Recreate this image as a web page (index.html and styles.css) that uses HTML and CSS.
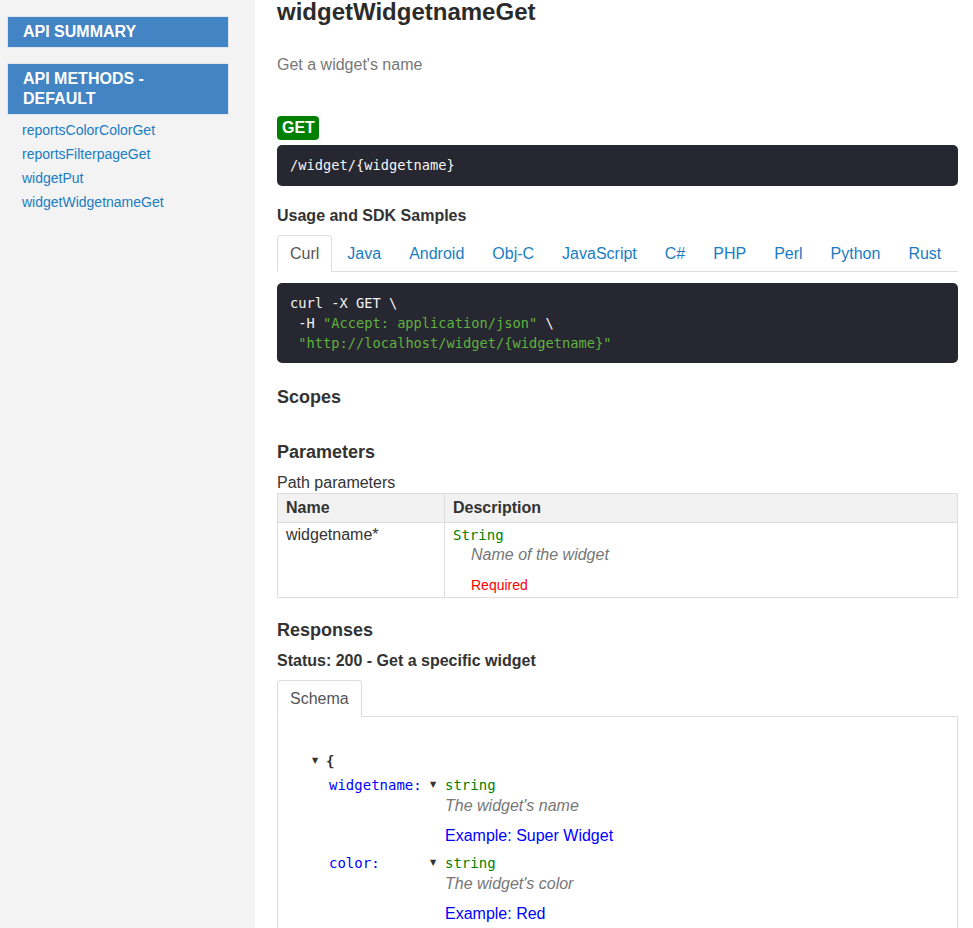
FILE: index.html
```html
<!DOCTYPE html>
<html>
<head>
<meta charset="utf-8">
<title>widgetWidgetnameGet</title>
<link rel="stylesheet" href="styles.css">
</head>
<body>
<div class="page">
  <nav class="sidebar">
    <div class="nav-header">API SUMMARY</div>
    <div class="nav-header nav-header-methods">API METHODS - DEFAULT</div>
    <ul class="nav-links">
      <li><a href="#">reportsColorColorGet</a></li>
      <li><a href="#">reportsFilterpageGet</a></li>
      <li><a href="#">widgetPut</a></li>
      <li><a href="#">widgetWidgetnameGet</a></li>
    </ul>
  </nav>
  <main class="content">
    <h1 class="method-title">widgetWidgetnameGet</h1>
    <p class="method-summary">Get a widget's name</p>
    <div class="method-row"><span class="badge-get">GET</span></div>
    <pre class="code code-path">/widget/{widgetname}</pre>

    <h3 class="sub-heading usage-heading">Usage and SDK Samples</h3>
    <ul class="tabs sdk-tabs">
      <li class="tab active"><a href="#">Curl</a></li>
      <li class="tab"><a href="#">Java</a></li>
      <li class="tab"><a href="#">Android</a></li>
      <li class="tab"><a href="#">Obj-C</a></li>
      <li class="tab"><a href="#">JavaScript</a></li>
      <li class="tab"><a href="#">C#</a></li>
      <li class="tab"><a href="#">PHP</a></li>
      <li class="tab"><a href="#">Perl</a></li>
      <li class="tab"><a href="#">Python</a></li>
      <li class="tab"><a href="#">Rust</a></li>
    </ul>
    <pre class="code code-sample">curl -X GET \
 -H <span class="str">"Accept: application/json"</span> \
 <span class="str">"http://localhost/widget/{widgetname}"</span></pre>

    <h2 class="section-heading scopes-heading">Scopes</h2>
    <h2 class="section-heading params-heading">Parameters</h2>
    <div class="param-group">Path parameters</div>
    <table class="params-table">
      <thead>
        <tr><th class="col-name">Name</th><th>Description</th></tr>
      </thead>
      <tbody>
        <tr>
          <td class="col-name">widgetname*</td>
          <td>
            <div class="param-type">String</div>
            <div class="param-desc">Name of the widget</div>
            <div class="param-required">Required</div>
          </td>
        </tr>
      </tbody>
    </table>

    <h2 class="section-heading responses-heading">Responses</h2>
    <h3 class="sub-heading status-heading">Status: 200 - Get a specific widget</h3>
    <ul class="tabs schema-tabs">
      <li class="tab active"><a href="#">Schema</a></li>
    </ul>
    <div class="tab-panel">
      <div class="json-view">
        <div class="obj-open"><span class="toggle">&#9660;</span><span class="bracket">{</span></div>
        <div class="props">
          <div class="prop">
            <span class="prop-name">widgetname:</span>
            <div class="prop-val">
              <div class="type-line"><span class="toggle">&#9660;</span><span class="type">string</span></div>
              <div class="desc">The widget's name</div>
              <div class="example">Example: Super Widget</div>
            </div>
          </div>
          <div class="prop">
            <span class="prop-name">color:</span>
            <div class="prop-val">
              <div class="type-line"><span class="toggle">&#9660;</span><span class="type">string</span></div>
              <div class="desc">The widget's color</div>
              <div class="example">Example: Red</div>
            </div>
          </div>
        </div>
        <div class="obj-close"><span class="bracket">}</span></div>
      </div>
    </div>
  </main>
</div>
</body>
</html>
```

FILE: styles.css
```css
html, body {
  margin: 0;
  padding: 0;
  overflow: hidden;
}

body {
  font-family: "Liberation Sans", Arial, Helvetica, sans-serif;
  font-size: 16px;
  line-height: 20px;
  color: #333;
  background: #fff;
}

.page {
  display: flex;
  min-height: 100vh;
}

/* ---------- sidebar ---------- */
.sidebar {
  width: 255px;
  flex: 0 0 255px;
  background: #f3f3f3;
  padding: 16px 26px 0 7px;
  box-sizing: border-box;
}

.nav-header {
  background: #4384c5;
  border: 1px solid #dfe6ee;
  color: #fff;
  font-weight: bold;
  font-size: 16px;
  line-height: 20px;
  padding: 5px 15px;
}

.nav-header-methods {
  margin-top: 15px;
}

.nav-links {
  list-style: none;
  margin: 3px 0 0 0;
  padding: 0 0 0 15px;
}

.nav-links li {
  font-size: 14px;
  line-height: 24px;
}

.nav-links a {
  color: #1a7cc4;
  text-decoration: none;
}

/* ---------- main ---------- */
.content {
  flex: 1;
  min-width: 0;
  padding: 0 15px 0 22px;
}

.method-title {
  margin: 0;
  font-size: 24px;
  line-height: 24px;
  font-weight: bold;
  color: #2b2b2b;
}

.method-summary {
  margin: 31px 0 0 0;
  color: #777;
  font-size: 16px;
  line-height: 20px;
}

.method-row {
  display: flex;
  margin-top: 41px;
}

.badge-get {
  display: inline-block;
  background: #008000;
  color: #fff;
  font-weight: bold;
  font-size: 16px;
  line-height: 24px;
  height: 24px;
  padding: 0 4px 0 5px;
  border-radius: 4px;
}

.code {
  margin: 0;
  background: #272731;
  color: #f4f4f4;
  border-radius: 5px;
  font-family: "DejaVu Sans Mono", monospace;
  font-size: 13.7px;
  white-space: pre;
}

.code-path {
  margin-top: 5px;
  padding: 10px 13px;
  line-height: 21px;
}

.code-sample {
  margin-top: 11px;
  padding: 10px 13px;
  line-height: 20px;
}

.code .str {
  color: #5fb13f;
}

.sub-heading {
  margin: 0;
  font-size: 16px;
  line-height: 20px;
  font-weight: bold;
}

.usage-heading {
  margin-top: 19.5px;
}

.tabs {
  list-style: none;
  margin: 0;
  padding: 0;
  display: flex;
  border-bottom: 1px solid #ddd;
}

.sdk-tabs {
  margin-top: 9.5px;
}

.tab {
  margin-bottom: -1px;
  margin-right: 2px;
}

.tab a {
  display: block;
  padding: 8px 12px;
  line-height: 19px;
  font-size: 16px;
  border: 1px solid transparent;
  border-radius: 4px 4px 0 0;
  color: #1a7cc4;
  text-decoration: none;
}

.tab.active a {
  color: #555;
  background: #fff;
  border-color: #ddd #ddd transparent #ddd;
}

.section-heading {
  margin: 0;
  font-size: 18px;
  line-height: 22px;
  font-weight: bold;
}

.scopes-heading {
  margin-top: 23px;
}

.params-heading {
  margin-top: 32.5px;
}

.param-group {
  margin-top: 10px;
  font-size: 16px;
  line-height: 20px;
}

.params-table {
  width: 100%;
  border-collapse: collapse;
  table-layout: fixed;
}

.params-table th,
.params-table td {
  border: 1px solid #ddd;
  text-align: left;
  vertical-align: top;
  font-size: 16px;
  line-height: 20px;
}

.params-table th {
  background: #f2f2f2;
  padding: 4px 8px;
  font-weight: bold;
}

.params-table td {
  padding: 2px 8px;
}

.params-table .col-name {
  width: 150px;
}

.param-type {
  font-family: "DejaVu Sans Mono", monospace;
  font-size: 14px;
  color: #008000;
}

.param-desc {
  padding-left: 18px;
  font-style: italic;
  color: #777;
}

.param-required {
  margin-top: 10px;
  padding-left: 18px;
  font-size: 14px;
  color: #ff0000;
}

.responses-heading {
  margin-top: 21px;
}

.status-heading {
  margin-top: 10.5px;
}

.schema-tabs {
  margin-top: 8.5px;
}

.tab-panel {
  border: 1px solid #ddd;
  border-top: none;
  padding: 34px 20px 20px 34px;
}

.json-view {
  font-size: 16px;
  line-height: 20px;
}

.toggle {
  display: inline-block;
  width: 14px;
  font-family: "DejaVu Sans", sans-serif;
  font-size: 8px;
  color: #333;
  vertical-align: top;
  line-height: 20px;
}

.bracket {
  font-family: "DejaVu Sans Mono", monospace;
  font-weight: bold;
  font-size: 14px;
  color: #333;
}

.props {
  margin-top: 4px;
  padding-left: 17px;
}

.prop {
  display: flex;
  margin-bottom: 7px;
}

.prop-name {
  flex: 0 0 101px;
  font-family: "DejaVu Sans Mono", monospace;
  font-size: 14px;
  line-height: 20px;
  color: #0000ff;
}

.type-line {
  font-family: "DejaVu Sans Mono", monospace;
  font-size: 14px;
  line-height: 20px;
}

.type-line .toggle {
  width: 15px;
}

.type {
  color: #008000;
}

.desc {
  margin-top: 1px;
  padding-left: 15px;
  font-style: italic;
  color: #777;
}

.example {
  margin-top: 10px;
  padding-left: 15px;
  color: #0000ff;
}
```
